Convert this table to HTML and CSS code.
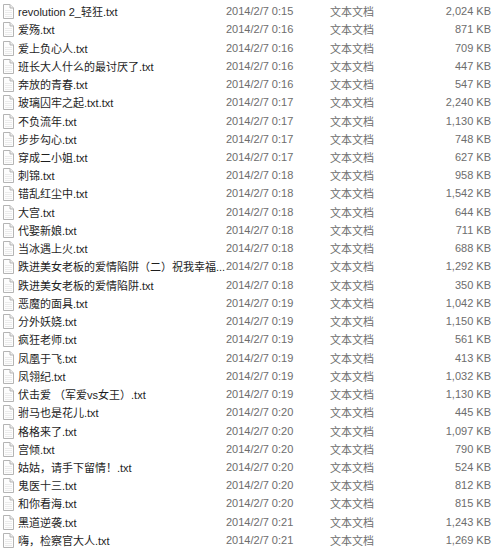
FILE: index.html
```html
<!DOCTYPE html>
<html lang="zh-CN">
<head>
<meta charset="utf-8">
<title>文件列表</title>
<link rel="stylesheet" href="styles.css">
</head>
<body>
<svg width="0" height="0" class="defs">
  <defs>
    <symbol id="doc" viewBox="0 0 12 15">
      <path d="M1.5 0.5 H8 L11.5 4 V14.5 H1.5 Z" fill="#fdfdfd" stroke="#b4b4b4" stroke-width="1"/>
      <path d="M8 0.5 V4 H11.5" fill="#ececec" stroke="#b4b4b4" stroke-width="1"/>
      <path d="M3 6.5 H10 M3 8.5 H10 M3 10.5 H10 M3 12.5 H10" stroke="#e6e6e6" stroke-width="0.8"/>
    </symbol>
  </defs>
</svg>
<div class="list" id="list"></div>
<script>
const rows = [
["revolution 2_轻狂.txt","0:15","2,024"],
["爱殇.txt","0:16","871"],
["爱上负心人.txt","0:16","709"],
["班长大人什么的最讨厌了.txt","0:16","447"],
["奔放的青春.txt","0:16","547"],
["玻璃囚牢之起.txt.txt","0:17","2,240"],
["不负流年.txt","0:17","1,130"],
["步步勾心.txt","0:17","748"],
["穿成二小姐.txt","0:17","627"],
["刺锦.txt","0:18","958"],
["错乱红尘中.txt","0:18","1,542"],
["大宫.txt","0:18","644"],
["代娶新娘.txt","0:18","711"],
["当冰遇上火.txt","0:18","688"],
["跌进美女老板的爱情陷阱（二）祝我幸福...","0:18","1,292"],
["跌进美女老板的爱情陷阱.txt","0:18","350"],
["恶魔的面具.txt","0:19","1,042"],
["分外妖娆.txt","0:19","1,150"],
["疯狂老师.txt","0:19","561"],
["凤凰于飞.txt","0:19","413"],
["凤翎纪.txt","0:19","1,032"],
["伏击爱 （军爱vs女王）.txt","0:19","1,130"],
["驸马也是花儿.txt","0:20","445"],
["格格来了.txt","0:20","1,097"],
["宫倾.txt","0:20","790"],
["姑姑，请手下留情！.txt","0:20","524"],
["鬼医十三.txt","0:20","812"],
["和你看海.txt","0:20","815"],
["黑道逆袭.txt","0:21","1,243"],
["嗨，检察官大人.txt","0:21","1,269"]
];
const list = document.getElementById('list');
for (const [name, time, size] of rows) {
  const r = document.createElement('div');
  r.className = 'row';
  r.innerHTML =
    '<span class="icon"><svg width="12" height="15"><use href="#doc"/></svg></span>' +
    '<span class="name"></span>' +
    '<span class="date">2014/2/7 ' + time + '</span>' +
    '<span class="type">文本文档</span>' +
    '<span class="size">' + size + ' KB</span>';
  r.querySelector('.name').textContent = name;
  list.appendChild(r);
}
</script>
</body>
</html>
```

FILE: styles.css
```css
html, body {
  margin: 0;
  padding: 0;
  background: #ffffff;
}
body {
  font-family: "Liberation Sans", "Noto Sans CJK SC", sans-serif;
  font-size: 11px;
  color: #6d6d6d;
}
.defs {
  position: absolute;
  width: 0;
  height: 0;
}
.list {
  padding-top: 2px;
}
.row {
  display: grid;
  grid-template-columns: 18px 208px 104px 80px 81px;
  height: 18.24px;
  align-items: center;
  white-space: nowrap;
}
.icon {
  display: flex;
  padding-left: 2px;
  padding-top: 1px;
}
.name {
  color: #1e1e1e;
  overflow: hidden;
}
.size {
  text-align: right;
}
```
